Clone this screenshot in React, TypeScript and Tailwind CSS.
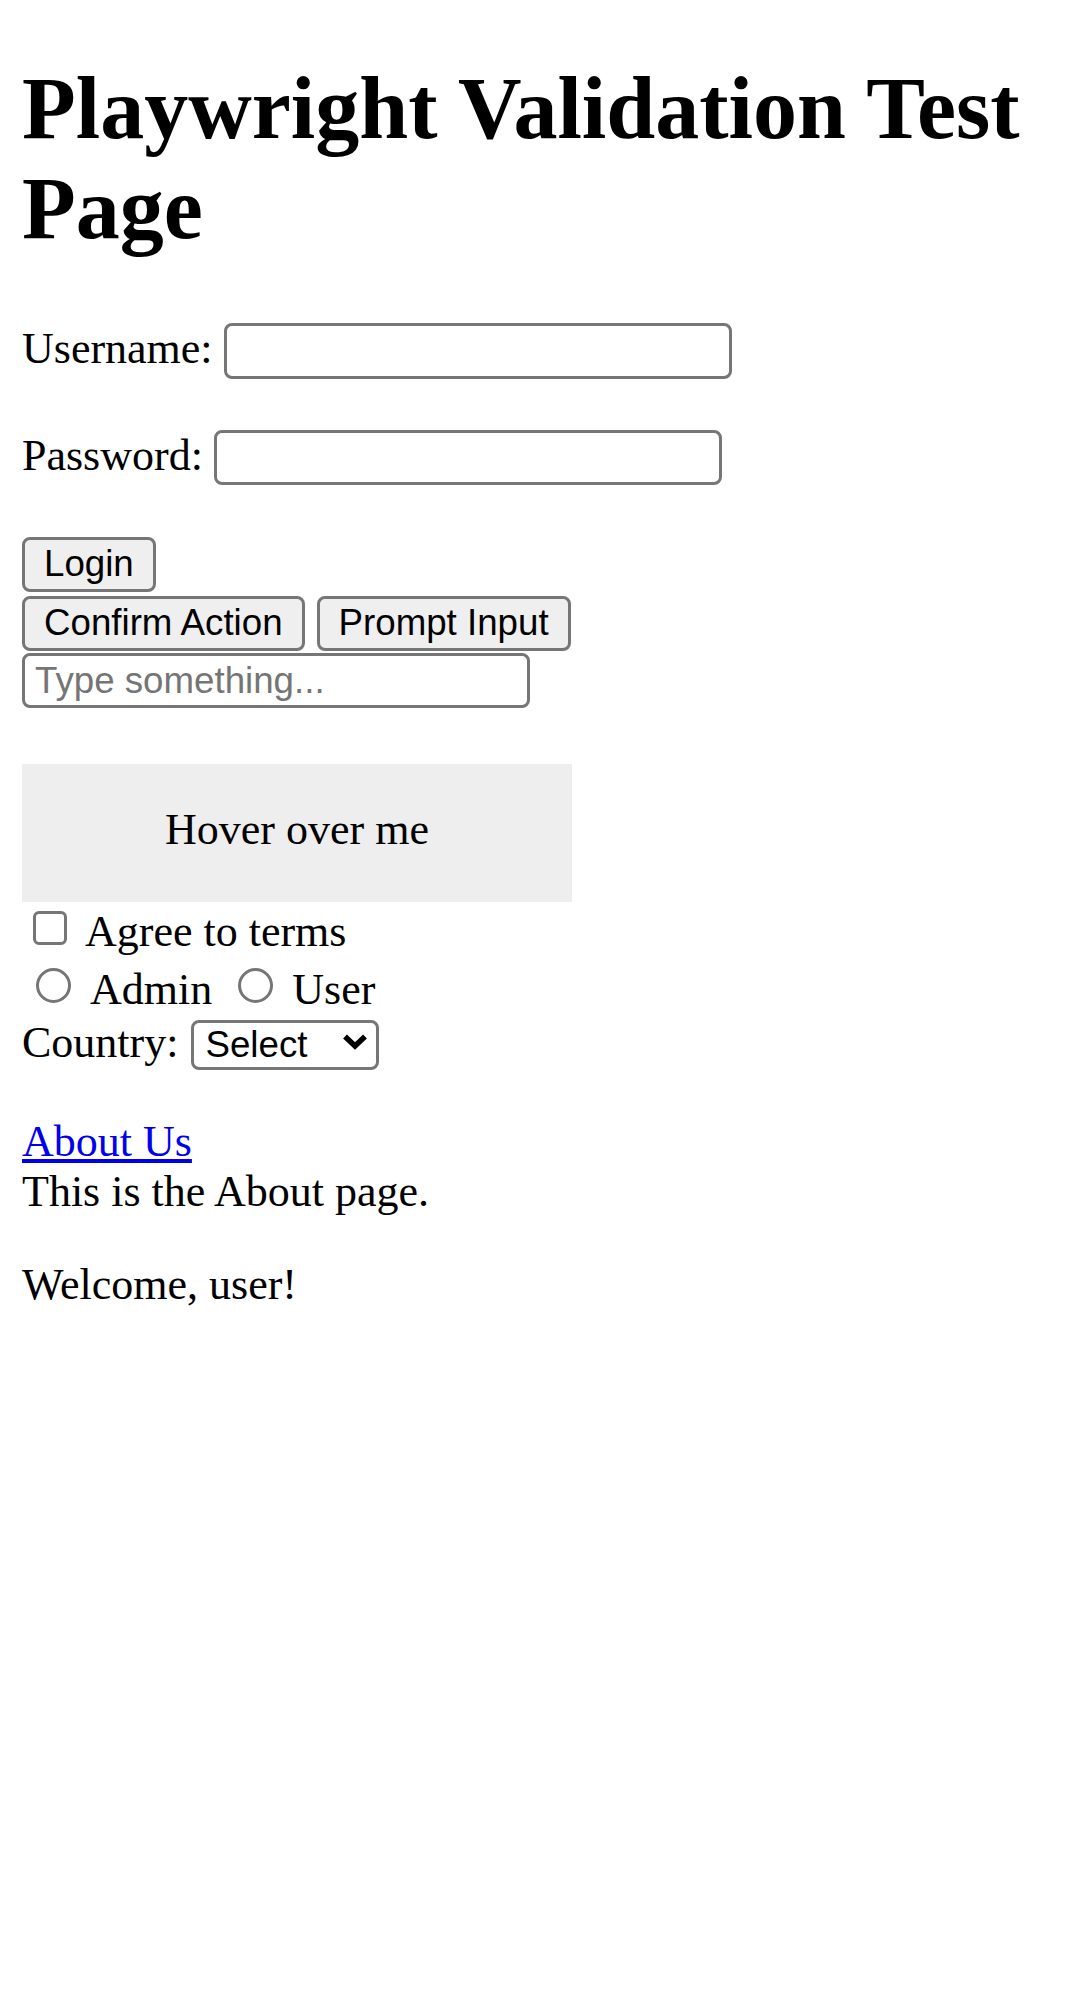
import React from 'react';

const field =
  "rounded-[8px] border-[3px] border-[#767676] bg-white font-['Liberation_Sans',Arial,sans-serif] text-[36.7px] text-black outline-none";
const btn =
  "h-[55px] rounded-[8px] border-[3px] border-[#767676] bg-[#efefef] px-[19px] font-['Liberation_Sans',Arial,sans-serif] text-[36.7px] leading-none text-black";

const App = () => {
  return (
    <div className="min-h-screen bg-white px-[22px] font-['Liberation_Serif','Times_New_Roman',serif] text-[44px] leading-[50px] text-black">
      <h1 className="mt-[59px] text-[88px] font-bold leading-[100px]">
        Playwright Validation Test Page
      </h1>

      <form className="flex flex-col items-start" onSubmit={(e) => e.preventDefault()}>
        <div className="mt-[64px] flex h-[56px] items-start gap-[11px]">
          <label htmlFor="username" className="mt-[1px]">
            Username:
          </label>
          <input id="username" type="text" className={`${field} h-[56px] w-[508px] px-[8px]`} />
        </div>
        <div className="mt-[51px] flex h-[55px] items-start gap-[11px]">
          <label htmlFor="password" className="mt-[1px]">
            Password:
          </label>
          <input id="password" type="password" className={`${field} h-[55px] w-[508px] px-[8px]`} />
        </div>

        <button type="submit" className={`${btn} mt-[52px]`}>
          Login
        </button>
        <div className="mt-[4px] flex gap-[12px]">
          <button type="button" className={btn}>
            Confirm Action
          </button>
          <button type="button" className={btn}>
            Prompt Input
          </button>
        </div>
        <input
          type="text"
          placeholder="Type something..."
          className={`${field} mt-[2px] h-[55px] w-[508px] pl-[10px] placeholder:text-[#757575]`}
        />

        <div className="mt-[56px] h-[138px] w-[550px] bg-[#eeeeee] pt-[41px] text-center">
          Hover over me
        </div>

        <div className="mt-[3px] flex h-[50px] items-start">
          <input
            id="terms"
            type="checkbox"
            className="ml-[11px] mt-[6px] size-[34px] appearance-none rounded-[6px] border-[3px] border-[#767676] bg-white"
          />
          <label htmlFor="terms" className="ml-[18px] mt-[2px]">
            Agree to terms
          </label>
        </div>

        <div className="mt-[8px] flex h-[50px] items-start">
          <input
            id="admin"
            type="radio"
            name="role"
            className="ml-[14px] mt-[5px] size-[35px] appearance-none rounded-full border-[3px] border-[#767676] bg-white"
          />
          <label htmlFor="admin" className="ml-[19px] mt-[2px]">
            Admin
          </label>
          <input
            id="user"
            type="radio"
            name="role"
            className="ml-[26px] mt-[5px] size-[35px] appearance-none rounded-full border-[3px] border-[#767676] bg-white"
          />
          <label htmlFor="user" className="ml-[19px] mt-[2px]">
            User
          </label>
        </div>

        <div className="mt-[3px] flex h-[52px] items-start gap-[13px]">
          <label htmlFor="country" className="mt-[2px]">
            Country:
          </label>
          <div className="relative mt-[2px]">
            <select
              id="country"
              className={`${field} h-[50px] w-[188px] appearance-none pl-[11px] leading-none`}
              defaultValue=""
            >
              <option value="">Select</option>
              <option value="us">USA</option>
              <option value="in">India</option>
            </select>
            <svg
              className="pointer-events-none absolute right-[11px] top-[15px] h-[17px] w-[26px]"
              viewBox="0 0 26 17"
              fill="none"
            >
              <path d="M3 3.5 L13 13 L23 3.5" stroke="black" strokeWidth="5.5" strokeLinejoin="miter" />
            </svg>
          </div>
        </div>
      </form>

      <div className="mt-[49px]">
        <a href="#about" className="text-[#0000ee] underline">
          About Us
        </a>
        <p>This is the About page.</p>
      </div>

      <p className="mt-[43px]">Welcome, user!</p>
    </div>
  );
};

export default App;
